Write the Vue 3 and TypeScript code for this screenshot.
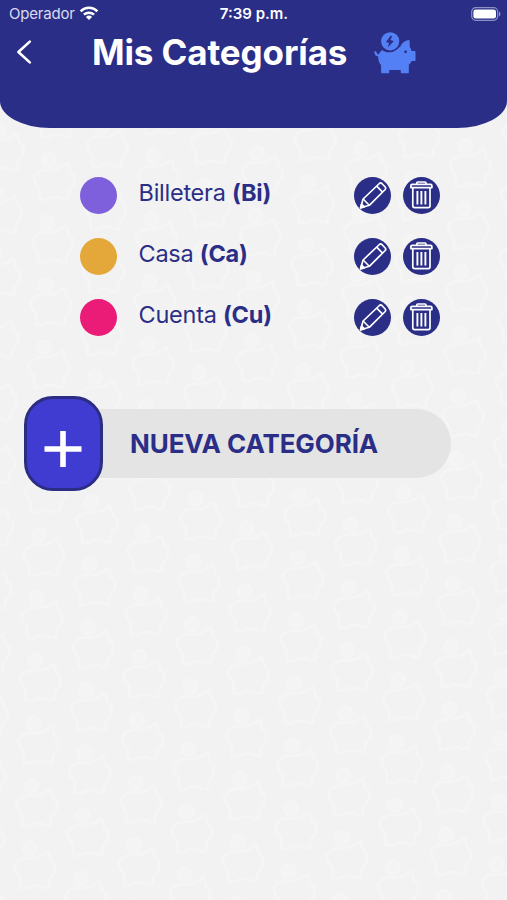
<script setup lang="ts">
interface Category {
  name: string
  code: string
  tone: string
}

const categories: Category[] = [
  { name: 'Billetera', code: 'Bi', tone: 'violet' },
  { name: 'Casa', code: 'Ca', tone: 'amber' },
  { name: 'Cuenta', code: 'Cu', tone: 'pink' },
]
</script>

<template>
  <div class="screen">
    <svg class="backdrop" width="507" height="900" aria-hidden="true">
      <defs>
        <g id="pig-outline" fill="none" stroke="#f5f5f5" stroke-width="2.8" stroke-linejoin="round">
          <circle cx="17" cy="8" r="6.5" fill="#f4f4f4" />
          <path d="M5 21 L2 25 L4 31 L8 37 L9 48 L17 48 L19 46 L29 46 L31 48 L37 48 L38 40 L43 33 L43 25 L39 22 L36 12 L29 16 L23 18 L11 18 Z" />
        </g>
        <pattern id="pigs" width="104" height="62.6" patternUnits="userSpaceOnUse" patternTransform="matrix(1 -0.033 -0.028 1 18 590.5)">
          <use href="#pig-outline" x="2" y="0" />
          <use href="#pig-outline" x="54" y="31.3" />
          <use href="#pig-outline" x="54" y="-31.3" />
        </pattern>
      </defs>
      <rect width="507" height="900" fill="url(#pigs)" />
    </svg>

    <header class="header">
      <div class="status">
        <div class="carrier">
          <span>Operador</span>
          <svg width="20" height="15" viewBox="0 0 20 15" fill="none" stroke="#fff" stroke-width="2.5">
            <path d="M1.6 5.3a12 12 0 0 1 16.8 0M4.9 8.7a7.4 7.4 0 0 1 10.2 0" />
            <path d="M10 14 6.9 10.9a4.4 4.4 0 0 1 6.2 0Z" fill="#fff" stroke="none" />
          </svg>
        </div>
        <span class="clock">7:39 p.m.</span>
        <svg class="battery" width="30" height="14" viewBox="0 0 30 14">
          <rect x=".7" y=".7" width="26" height="12.6" rx="4" fill="none" stroke="#8d8fc5" stroke-width="1.2" />
          <rect x="2.4" y="2.4" width="22.6" height="9.2" rx="2.4" fill="#fff" />
          <path d="M28 4.6v4.8c2-.8 2-4 0-4.8Z" fill="#8d8fc5" />
        </svg>
      </div>
      <div class="titlebar">
        <button class="back" aria-label="Volver">
          <svg width="16" height="26" viewBox="0 0 16 26" fill="none" stroke="#fff" stroke-width="2.6" stroke-linecap="round" stroke-linejoin="round">
            <path d="M13.8 2.6 2.4 13l11.4 10.4" />
          </svg>
        </button>
        <h1>Mis Categorías</h1>
        <svg class="pig" width="42" height="42" viewBox="0 0 42 42">
          <path fill="#5480f5" d="M.4 19.2c.9-.8 2 .1 2.2 1.4.2 1.1 1 1.500 2.300 1.600.6-1.600 1.800-3 3.400-4.200 3.200 3 9.600 3.300 13.200 0l2.200-2 2.600-1.300c1-3.100 4.800-6.200 8.600-6.700.5 0 .7.3.7.8l.1 6c.8 1.200 1.500 2.700 1.900 4.100h3c.6 0 .9.3.9.9v8.300c0 .6-.3.9-.9.9h-2.800c-.8 1.500-1.800 2.800-3 3.800v7.600c0 .6-.3.9-.9.9h-6.200c-.6 0-.9-.3-.9-.9V38H15.200v2.400c0 .6-.3.9-.9.9H8c-.6 0-.9-.3-.9-.9V33c-1.900-2-2.900-5-3-8.600C2 24.100.8 23.100.6 21.500Z" />
          <circle cx="31.6" cy="19.8" r="1.4" fill="#2b2e87" />
          <circle cx="16.2" cy="9.3" r="9.9" fill="#5480f5" stroke="#2b2e87" stroke-width="1.6" />
          <path fill="#2b2e87" d="m16.800 3.400-5 6.800 3.300.6-1.300 4.800 6.100-6.700-3.500-.8 1.800-3.800Z" />
        </svg>
      </div>
    </header>

    <main>
      <ul class="list">
        <li v-for="item in categories" :key="item.code" class="row">
          <span class="dot" :class="item.tone"></span>
          <span class="label">{{ item.name }} <b>({{ item.code }})</b></span>
          <button class="action" aria-label="Editar">
            <svg width="37" height="37" viewBox="0 0 37 37" fill="none" stroke="#fff" stroke-width="1.7" stroke-linejoin="round">
              <path d="m6.600 30.800 2.500-8.800L25.400 6.500c.8-.7 1.700-.7 2.500 0l3.300 3.500c.7.8.7 1.700 0 2.500L15.300 28.300Z" />
              <path d="m9.100 22 6.200 6.300M22.700 9.100l5.900 6" stroke-width="1.600" />
              <path d="m6.600 30.800 1-3.600 2.700 2.700Z" fill="#fff" />
            </svg>
          </button>
          <button class="action" aria-label="Eliminar">
            <svg width="37" height="37" viewBox="0 0 37 37" fill="none" stroke="#fff" stroke-width="1.7" stroke-linejoin="round">
              <path d="M13.800 7.300V6c0-.7.4-1 1-1h7.200c.6 0 1 .3 1 1v1.300M9.300 7.300h18.200c.9 0 1.400.5 1.400 1.400v1.900h-21V8.700c0-.9.5-1.400 1.400-1.400Z" />
              <path d="M9.800 10.600v18.200c0 1.200.6 1.800 1.800 1.800h13.600c1.200 0 1.800-.6 1.800-1.800V10.600" />
              <path d="M14.400 14v13.500M18.400 14v13.500M22.400 14v13.500" stroke-width="1.900" />
            </svg>
          </button>
        </li>
      </ul>

      <button class="create">
        <span class="plus">
          <svg width="38" height="36" viewBox="0 0 38 36" stroke="#fff" stroke-width="5.6">
            <path d="M.5 18h37M19 0v36" />
          </svg>
        </span>
        <span class="create-label">NUEVA CATEGORÍA</span>
      </button>
    </main>
  </div>
</template>

<style>
body {
  margin: 0;
  background: #f2f2f2;
}
</style>

<style scoped>
.screen {
  position: relative;
  width: 507px;
  height: 900px;
  overflow: hidden;
  background: #f2f2f2;
  font-family: Inter, 'Liberation Sans', sans-serif;
  color: #2b2e87;
}
.backdrop {
  position: absolute;
  inset: 0;
}
button {
  padding: 0;
  border: 0;
  background: none;
  font: inherit;
  color: inherit;
}
svg {
  display: block;
}
.header {
  position: relative;
  box-sizing: border-box;
  height: 128px;
  background: #2b2e87;
  color: #fff;
  border-radius: 0 0 50px 50px / 0 0 27px 27px;
}
.status {
  display: grid;
  grid-template-columns: 1fr auto 1fr;
  align-items: center;
  height: 27px;
  padding: 0 6px 0 9px;
}
.carrier {
  display: flex;
  align-items: center;
  gap: 4px;
  font-size: 15px;
  color: #d9dbf0;
  letter-spacing: -0.2px;
}
.clock {
  position: relative;
  left: -1px;
  font-size: 15px;
  font-weight: 600;
}
.battery {
  justify-self: end;
}
.titlebar {
  display: flex;
  align-items: center;
  height: 50px;
  padding-left: 16px;
}
.back {
  width: 76px;
}
h1 {
  width: 282px;
  margin: 0;
  font-size: 35px;
  line-height: 50px;
  font-weight: 700;
  letter-spacing: -0.12px;
  white-space: nowrap;
}
.pig {
  margin-top: 2px;
}
main {
  position: relative;
  padding: 49px 0 0 24px;
}
.list {
  display: grid;
  gap: 24px;
  margin: 0;
  padding: 0 0 0 56px;
  list-style: none;
}
.row {
  display: flex;
  align-items: center;
  height: 37px;
}
.dot {
  width: 37px;
  height: 37px;
  margin-right: 21.5px;
  border-radius: 50%;
}
.violet {
  background: #7f60dc;
}
.amber {
  background: #e3a839;
}
.pink {
  background: #ea1c77;
}
.label {
  width: 215.5px;
  padding-bottom: 6px;
  font-size: 23.5px;
  line-height: 31px;
  letter-spacing: -0.25px;
  white-space: nowrap;
}
.action {
  width: 37px;
  height: 37px;
  margin-right: 12px;
  border-radius: 50%;
  background: #2b2e87;
}
.create {
  display: flex;
  align-items: center;
  width: 427px;
  height: 95px;
  margin-top: 60px;
}
.plus {
  position: relative;
  z-index: 1;
  display: flex;
  justify-content: center;
  align-items: center;
  flex: none;
  box-sizing: border-box;
  width: 79px;
  height: 95px;
  padding-top: 10px;
  border: 3px solid #2a2d83;
  border-radius: 29px;
  background: #403bd1;
}
.plus svg {
  margin-right: 1px;
}
.create-label {
  flex: 1;
  box-sizing: border-box;
  height: 69px;
  margin-left: -20px;
  padding-left: 47px;
  border-radius: 0 35px 35px 0;
  background: #e4e4e4;
  font-size: 26px;
  line-height: 69px;
  font-weight: 700;
  letter-spacing: -0.1px;
  text-align: left;
  white-space: nowrap;
}
</style>
